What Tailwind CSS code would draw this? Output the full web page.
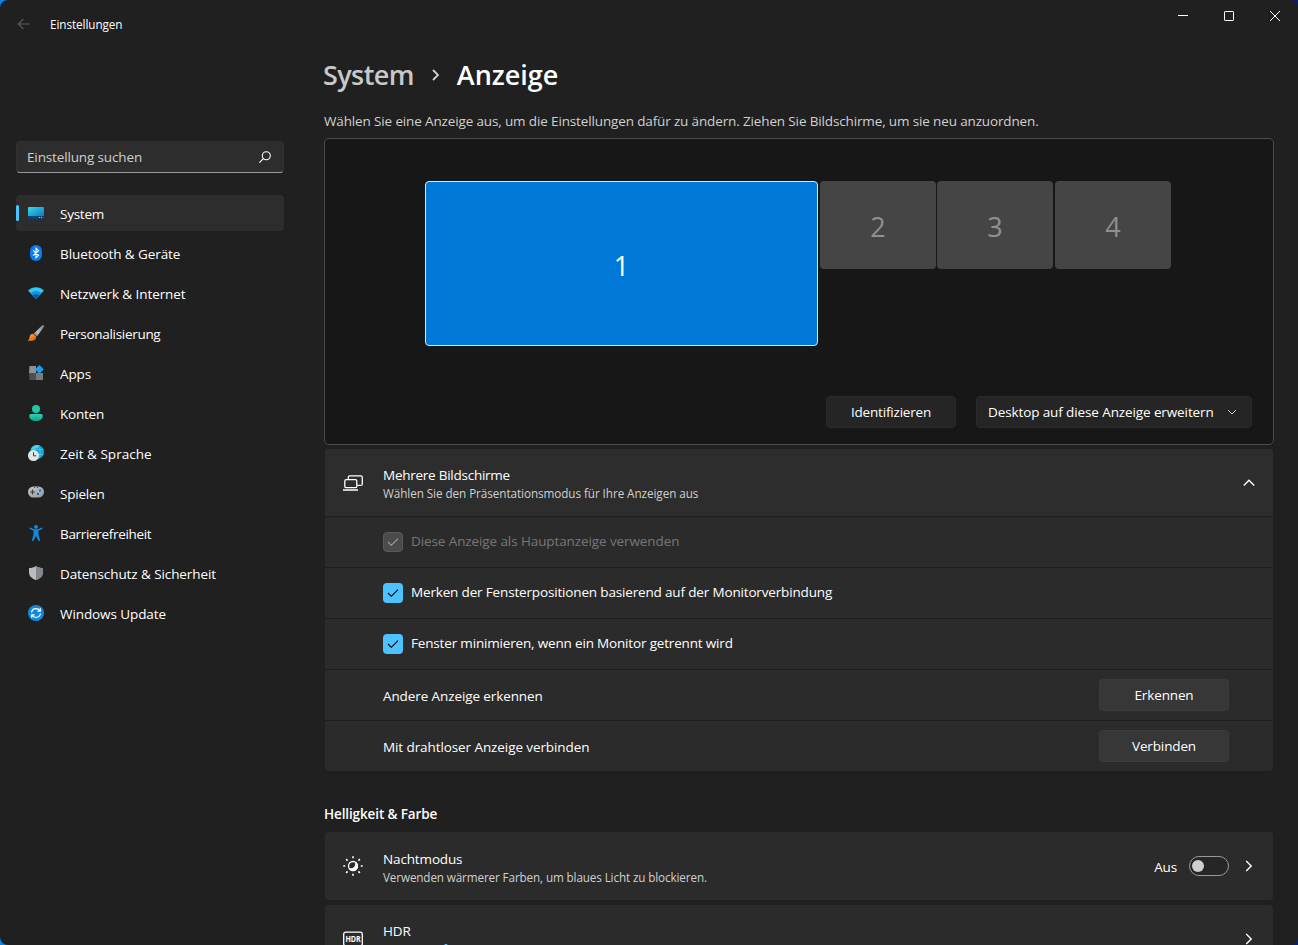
<!DOCTYPE html>
<html lang="de">
<head>
<meta charset="utf-8">
<title>Einstellungen</title>
<script src="https://cdn.jsdelivr.net/npm/@tailwindcss/browser@4"></script>
</head>
<body class="w-[1298px] h-[945px] overflow-hidden bg-[linear-gradient(90deg,#0a84e8_0,#0a84e8_50%,#0b1f6b_50%)] font-['Open_Sans','Noto_Sans',sans-serif] text-[13.5px] leading-5 tracking-[-0.14px] text-white">
<div class="relative flex h-[945px] w-[1298px] flex-col overflow-hidden rounded-lg bg-[#202020]">

  <!-- Title bar -->
  <header class="flex h-12 shrink-0 items-start justify-between">
    <div class="flex items-center pt-[14px] pl-[17px]">
      <svg class="h-5 w-[14px]" viewBox="0 0 14 20" fill="none" stroke="#5c5c5c" stroke-width="1.1"><path d="M13 10H1.500M6.500 4.800L1.300 10l5.200 5.200"/></svg>
      <span class="ml-[19px] text-[11.7px] tracking-[-0.06px]">Einstellungen</span>
    </div>
    <div class="flex h-8 items-center">
      <span class="flex w-[46px] justify-center"><svg class="size-[10px]" viewBox="0 0 10 10" stroke="#fff" shape-rendering="crispEdges"><path d="M0 4.5h10"/></svg></span>
      <span class="flex w-[46px] justify-center"><svg class="size-[10px]" viewBox="0 0 10 10" fill="none" stroke="#fff"><rect x=".5" y=".5" width="9" height="9" rx=".6"/></svg></span>
      <span class="flex w-[46px] justify-center"><svg class="size-[10px]" viewBox="0 0 10 10" stroke="#fff"><path d="M0 0l10 10M10 0L0 10"/></svg></span>
    </div>
  </header>

  <div class="flex min-h-0 flex-1">
    <!-- Sidebar -->
    <aside class="ml-4 w-[268px] shrink-0 pt-[93px]">
      <div class="flex h-8 items-center justify-between rounded border border-[#303030] border-b-[#9a9a9a] bg-[#2d2d2d] pr-[11px] pl-[10px] text-[#cfcfcf]">
        <span>Einstellung suchen</span>
        <svg class="size-[14px]" viewBox="0 0 14 14" fill="none" stroke="#fff" stroke-width="1.1"><circle cx="8.3" cy="5.8" r="4"/><path d="M5.400 8.700L1.400 12.700"/></svg>
      </div>
      <nav class="mt-[22px] flex flex-col gap-1">
        <a class="relative flex h-9 items-center rounded bg-[#2d2d2d] pl-3">
          <i class="absolute top-[10px] left-0 h-4 w-[3px] rounded-full bg-[#4cc2ff]"></i>
          <svg class="size-4" viewBox="0 0 16 16"><defs><linearGradient id="sy" x2="1" y2="1"><stop stop-color="#36dbe6"/><stop offset="1" stop-color="#0f78c8"/></linearGradient></defs><rect y="2" width="16" height="12" rx="1" fill="#0b456f"/><path d="M0 11V3a1 1 0 011-1h14a1 1 0 011 1v8z" fill="url(#sy)"/><path d="M11 12h1v1h-1zM13 12h1v1h-1z" fill="#7fd8f4"/></svg>
          <span class="ml-4 pt-[2px] tracking-[-0.25px]">System</span>
        </a>
        <a class="flex h-9 items-center pl-3">
          <svg class="size-4" viewBox="0 0 16 16"><rect x="2" width="12" height="16" rx="6" fill="#0a7cf2"/><path d="M5 5.3l5.6 5L8 12.800V3.200l2.600 2.500L5 10.700" fill="none" stroke="#fff" stroke-width="1.1"/></svg>
          <span class="ml-4 pt-[2px] tracking-[-0.08px]">Bluetooth &amp; Geräte</span>
        </a>
        <a class="flex h-9 items-center pl-3">
          <svg class="size-4" viewBox="0 0 16 16"><path d="M8 14L0 5.600C4.500 1 11.500 1 16 5.600z" fill="#35c5f2"/><path d="M8 14L2.600 8.300c3-3 7.800-3 10.800 0z" fill="#158fdf"/><path d="M8 14L4.700 10.500c1.900-1.800 4.700-1.800 6.600 0z" fill="#0c59a4"/></svg>
          <span class="ml-4 pt-[2px] tracking-[-0.08px]">Netzwerk &amp; Internet</span>
        </a>
        <a class="flex h-9 items-center pl-3">
          <svg class="size-4" viewBox="0 0 16 16"><defs><linearGradient id="br" x1="1" y1="0" x2="0" y2="1"><stop stop-color="#77797c"/><stop offset=".6" stop-color="#b9bcc0"/><stop offset="1" stop-color="#85888c"/></linearGradient><linearGradient id="bo" x2="1" y2="1"><stop stop-color="#ffb52b"/><stop offset="1" stop-color="#e2500e"/></linearGradient></defs><path d="M15.700.3c.5.6.3 1.300-.2 2.100L9 11.300 5.800 8.600 13.500.9c.8-.8 1.700-1.100 2.200-.6z" fill="url(#br)"/><path d="M5.300 8.800l2.900 2.700c.3 2.600-1.700 4.300-4.400 4.300H.4c-.5 0-.5-.6-.1-.8 1.100-.6 1-1.500 1.300-3 .4-2 1.700-3.200 3.700-3.200z" fill="url(#bo)"/></svg>
          <span class="ml-4 pt-[2px] tracking-[-0.3px]">Personalisierung</span>
        </a>
        <a class="flex h-9 items-center pl-3">
          <svg class="size-4" viewBox="0 0 16 16"><path d="M1.500 1H8v7H1z" fill="#8e9298"/><path d="M1 8h7v7H1.500z" fill="#4c4f54"/><path d="M8 8h7v6.500l-.5.5H8z" fill="#777c83"/><rect x="8.300" y="1.300" width="6.200" height="6.200" rx=".8" transform="rotate(45 11.400 4.400)" fill="#1f9de9"/></svg>
          <span class="ml-4 pt-[2px]">Apps</span>
        </a>
        <a class="flex h-9 items-center pl-3">
          <svg class="size-4" viewBox="0 0 16 16"><defs><linearGradient id="ko" x2="0" y2="1"><stop stop-color="#2bd3b4"/><stop offset="1" stop-color="#12a085"/></linearGradient></defs><circle cx="8" cy="4" r="4" fill="#1fc8a8"/><path d="M3 9h10c1 0 1.800.8 1.800 1.800C14.800 14.400 11.700 16 8 16s-6.800-1.600-6.800-5.200C1.200 9.800 2 9 3 9z" fill="url(#ko)"/></svg>
          <span class="ml-4 pt-[2px] tracking-[-0.22px]">Konten</span>
        </a>
        <a class="flex h-9 items-center pl-3">
          <svg class="size-4" viewBox="0 0 16 16"><circle cx="9" cy="7" r="7" fill="#15a3dc"/><path d="M3 4c1-2.500 3.500-4 6-4 1 0 2 .2 3 .7C10.500 3 6 5 3 4z" fill="#4ad4ea"/><path d="M3 4.500h12.500M10 9.500h5.500M9 0c4 4 4 9 1.500 13.500" fill="none" stroke="#58cdec" stroke-width=".7"/><circle cx="5.500" cy="10.500" r="5.500" fill="#e4e4e4"/><path d="M5.500 7.300v3.500h2.700" fill="none" stroke="#3c3c3c"/></svg>
          <span class="ml-4 pt-[2px] tracking-[0.01px]">Zeit &amp; Sprache</span>
        </a>
        <a class="flex h-9 items-center pl-3">
          <svg class="size-4" viewBox="0 0 16 16"><defs><linearGradient id="sp" x2="1" y2="1"><stop stop-color="#c8ccd0"/><stop offset="1" stop-color="#92979d"/></linearGradient></defs><rect y="1.500" width="16" height="11" rx="5.500" fill="url(#sp)"/><path d="M2 7h5M4.500 4.500v5" stroke="#3f4347" stroke-width="1.200"/><path d="M6 2.500h1.200M9 2.500h1.200" stroke="#555"/><path d="M11 4.500h2v2h-2zM9 8h2v2H9z" fill="#0c6fd0"/></svg>
          <span class="ml-4 pt-[2px] tracking-[-0.2px]">Spielen</span>
        </a>
        <a class="flex h-9 items-center pl-3">
          <svg class="size-4" viewBox="0 0 16 16"><circle cx="8" cy="1.900" r="1.900" fill="#1490df"/><path d="M2.400 2.500C1.500 2.200 1 3.500 2 4l3.500 1.700v3.800L4 15c-.2 1 1.200 1.500 1.700.5L8 11l2.300 4.500c.5 1 1.900.5 1.700-.5l-1.500-5.500V5.700L14 4c1-.5.500-1.800-.4-1.500L10 4.200H6z" fill="#1287dc"/></svg>
          <span class="ml-4 pt-[2px] tracking-[-0.32px]">Barrierefreiheit</span>
        </a>
        <a class="flex h-9 items-center pl-3">
          <svg class="size-4" viewBox="0 0 16 16"><path d="M8 1c2 1.400 4.300 2 7 2v4c0 4-2.500 6.500-7 8-4.500-1.500-7-4-7-8V3c2.700 0 5-.6 7-2z" fill="#b9bcc0"/><path d="M8 1c2 1.400 4.300 2 7 2v4c0 4-2.500 6.500-7 8z" fill="#84888d"/></svg>
          <span class="ml-4 pt-[2px] tracking-[-0.09px]">Datenschutz &amp; Sicherheit</span>
        </a>
        <a class="flex h-9 items-center pl-3">
          <svg class="size-4" viewBox="0 0 16 16"><circle cx="8" cy="8" r="8" fill="#128ae0"/><path d="M3.500 7.500C4 5 6 3.600 8 3.600c1.600 0 3 .8 3.900 2.200M12.500 8.500c-.5 2.500-2.500 3.900-4.500 3.900-1.600 0-3-.8-3.900-2.200M12.300 3.200v2.900H9.400M3.700 12.800V9.900h2.900" fill="none" stroke="#fff" stroke-width="1.200"/></svg>
          <span class="ml-4 pt-[2px] tracking-[-0.09px]">Windows Update</span>
        </a>
      </nav>
    </aside>

    <!-- Main content -->
    <main class="ml-10 w-[950px] shrink-0">
      <h1 class="flex h-14 items-center pb-[2px] text-[27px] leading-[36px] font-semibold">
        <span class="-ml-px tracking-[-0.6px] text-[#c8c8c8]">System</span>
        <svg class="ml-[18px] h-[14px] w-2" viewBox="0 0 8 14" fill="none" stroke="#d0d0d0" stroke-width="1.800"><path d="M1 2l5 5-5 5"/></svg>
        <span class="ml-[17px] tracking-[0px]">Anzeige</span>
      </h1>
      <p class="mt-[7px] h-[27px] whitespace-nowrap text-[#d0d0d0]">Wählen Sie eine Anzeige aus, um die Einstellungen dafür zu ändern. Ziehen Sie Bildschirme, um sie neu anzuordnen.</p>

      <section class="relative flex h-[307px] items-end justify-end gap-5 rounded-[5px] border border-[#4b4b4b] bg-[#171717] pr-[21px] pb-4">
        <div class="absolute top-[42px] left-[100px] flex h-[165px] w-[393px] items-center justify-center rounded border border-[#d5e6f5] bg-[#0078d7] pt-[5px] text-[27px]">1</div>
        <div class="absolute top-[42px] left-[495px] flex h-[88px] w-[116px] items-center justify-center rounded bg-[#454545] pt-[3px] text-[27px] text-[#909090]">2</div>
        <div class="absolute top-[42px] left-[612px] flex h-[88px] w-[116px] items-center justify-center rounded bg-[#454545] pt-[3px] text-[27px] text-[#909090]">3</div>
        <div class="absolute top-[42px] left-[730px] flex h-[88px] w-[116px] items-center justify-center rounded bg-[#454545] pt-[3px] text-[27px] text-[#909090]">4</div>
        <button class="flex h-8 w-[130px] items-center justify-center rounded border border-[#2a2a2a] bg-[#252525] tracking-[-0.18px]">Identifizieren</button>
        <button class="flex h-8 w-[276px] items-center justify-between rounded border border-[#2a2a2a] bg-[#252525] pr-[14px] pl-[11px]"><span class="tracking-[-0.11px]">Desktop auf diese Anzeige erweitern</span>
          <svg class="h-[6px] w-[10px]" viewBox="0 0 10 6" fill="none" stroke="#c8c8c8"><path d="M1 1l4 4 4-4"/></svg></button>
      </section>

      <section class="mt-1 mx-px rounded bg-[#2b2b2b] overflow-hidden">
        <div class="flex h-[67px] items-center bg-[#2d2d2d] pr-[18px] pl-[18px]">
          <svg class="h-5 w-5" viewBox="0 0 20 20" fill="none" stroke="#fff" stroke-width="1.300"><rect x="1.800" y="6.700" width="12" height="8" rx="1.300"/><path d="M5.300 6.500V4.400c0-1 .5-1.500 1.500-1.500h11c1 0 1.500.5 1.500 1.500v6.500c0 1-.5 1.500-1.500 1.500h-3.500M0 17h15"/></svg>
          <div class="ml-5 flex-1 pt-px"><div class="h-[18px] leading-[18px] tracking-[-0.25px]">Mehrere Bildschirme</div><div class="h-4 text-[11.700px] leading-[18px] tracking-[-0.06px] text-[#d0d0d0]">Wählen Sie den Präsentationsmodus für Ihre Anzeigen aus</div></div>
          <svg class="h-2 w-3" viewBox="0 0 12 8" fill="none" stroke="#fff" stroke-width="1.400"><path d="M.8 6.500L6 1.300l5.200 5.200"/></svg>
        </div>
        <div class="flex h-[51px] items-center border-t border-[#1d1d1d] pl-[58px] text-[#777]">
          <span class="flex size-5 items-center justify-center rounded bg-[#4b4b4b] border border-[#5a5a5a]"><svg class="h-2 w-3" viewBox="0 0 12 8" fill="none" stroke="#a0a0a0" stroke-width="1.100"><path d="M1 4l3.300 3.300L11 .7"/></svg></span>
          <span class="ml-2 pb-[3px] tracking-[-0.1px]">Diese Anzeige als Hauptanzeige verwenden</span>
        </div>
        <div class="flex h-[51px] items-center border-t border-[#1d1d1d] pl-[58px]">
          <span class="flex size-5 items-center justify-center rounded bg-[#4cc2ff]"><svg class="h-2 w-3" viewBox="0 0 12 8" fill="none" stroke="#000" stroke-width="1.100"><path d="M1 4l3.300 3.300L11 .7"/></svg></span>
          <span class="ml-2 pb-[3px] tracking-[-0.16px]">Merken der Fensterpositionen basierend auf der Monitorverbindung</span>
        </div>
        <div class="flex h-[51px] items-center border-t border-[#1d1d1d] pl-[58px]">
          <span class="flex size-5 items-center justify-center rounded bg-[#4cc2ff]"><svg class="h-2 w-3" viewBox="0 0 12 8" fill="none" stroke="#000" stroke-width="1.100"><path d="M1 4l3.300 3.300L11 .7"/></svg></span>
          <span class="ml-2 pb-[3px] tracking-[-0.17px]">Fenster minimieren, wenn ein Monitor getrennt wird</span>
        </div>
        <div class="flex h-[51px] items-center justify-between border-t border-[#1d1d1d] pr-11 pl-[58px]">
          <span class="pt-[2px] tracking-[-0.1px]">Andere Anzeige erkennen</span>
          <button class="h-8 w-[130px] rounded border border-[#3c3c3c] bg-[#373737]">Erkennen</button>
        </div>
        <div class="flex h-[51px] items-center justify-between border-t border-[#1d1d1d] pr-11 pl-[58px]">
          <span class="pt-[2px] tracking-[-0.09px]">Mit drahtloser Anzeige verbinden</span>
          <button class="h-8 w-[130px] rounded border border-[#3c3c3c] bg-[#373737]">Verbinden</button>
        </div>
      </section>

      <h2 class="mt-[33px] h-7 text-[13.500px] font-semibold tracking-[-0.120px]">Helligkeit &amp; Farbe</h2>

      <section class="mx-px flex h-[68px] items-center rounded bg-[#2b2b2b] pr-5 pl-[18px]">
        <svg class="size-5" viewBox="0 0 20 20" fill="none" stroke="#fff"><circle cx="10" cy="10" r="4.500" stroke-width="1.300"/><path d="M12.800 6.600a4.500 4.500 0 11-6.400 6.200c4 .5 6.500-2 6.400-6.200z" fill="#fff"/><path stroke-width="1.600" d="M10 .3v1.900M10 17.800v1.900M.3 10h1.900M17.800 10h1.900M3.100 3.100l1.500 1.500M15.400 15.400l1.500 1.500M3.100 16.900l1.500-1.500M15.400 4.600l1.500-1.500"/></svg>
        <div class="ml-5 flex-1 pt-px"><div class="h-[18px] leading-[18px]">Nachtmodus</div><div class="h-4 text-[11.700px] leading-[18px] tracking-[-0.120px] text-[#d0d0d0]">Verwenden wärmerer Farben, um blaues Licht zu blockieren.</div></div>
        <span class="pt-[2px]">Aus</span>
        <span class="ml-3 flex h-5 w-10 items-center rounded-full border border-[#9a9a9a] bg-[#262626] pl-[2px]"><i class="size-3 rounded-full bg-[#cfcfcf]"></i></span>
        <svg class="ml-4 h-3 w-2" viewBox="0 0 8 12" fill="none" stroke="#fff" stroke-width="1.400"><path d="M1.200 1l5 5-5 5"/></svg>
      </section>

      <section class="mx-px mt-[5px] flex h-[68px] items-center rounded bg-[#2b2b2b] pr-5 pl-[18px]">
        <svg class="size-5" viewBox="0 0 20 20" fill="none"><rect x=".7" y="3.200" width="18.600" height="13.600" rx="2" stroke="#fff" stroke-width="1.300"/><text x="10" y="13" text-anchor="middle" textLength="15" lengthAdjust="spacingAndGlyphs" font-family="Open Sans" font-size="8" font-weight="700" fill="#fff">HDR</text></svg>
        <div class="ml-5 flex-1 pt-px"><div class="h-[18px] leading-4">HDR</div><div class="h-4 text-[12px] leading-[17px] tracking-[0.25px] text-[#60cdff]">Weitere Informationen zu HDR</div></div>
        <svg class="h-3 w-2" viewBox="0 0 8 12" fill="none" stroke="#fff" stroke-width="1.400"><path d="M1.200 1l5 5-5 5"/></svg>
      </section>
    </main>
  </div>
</div>
</body>
</html>
